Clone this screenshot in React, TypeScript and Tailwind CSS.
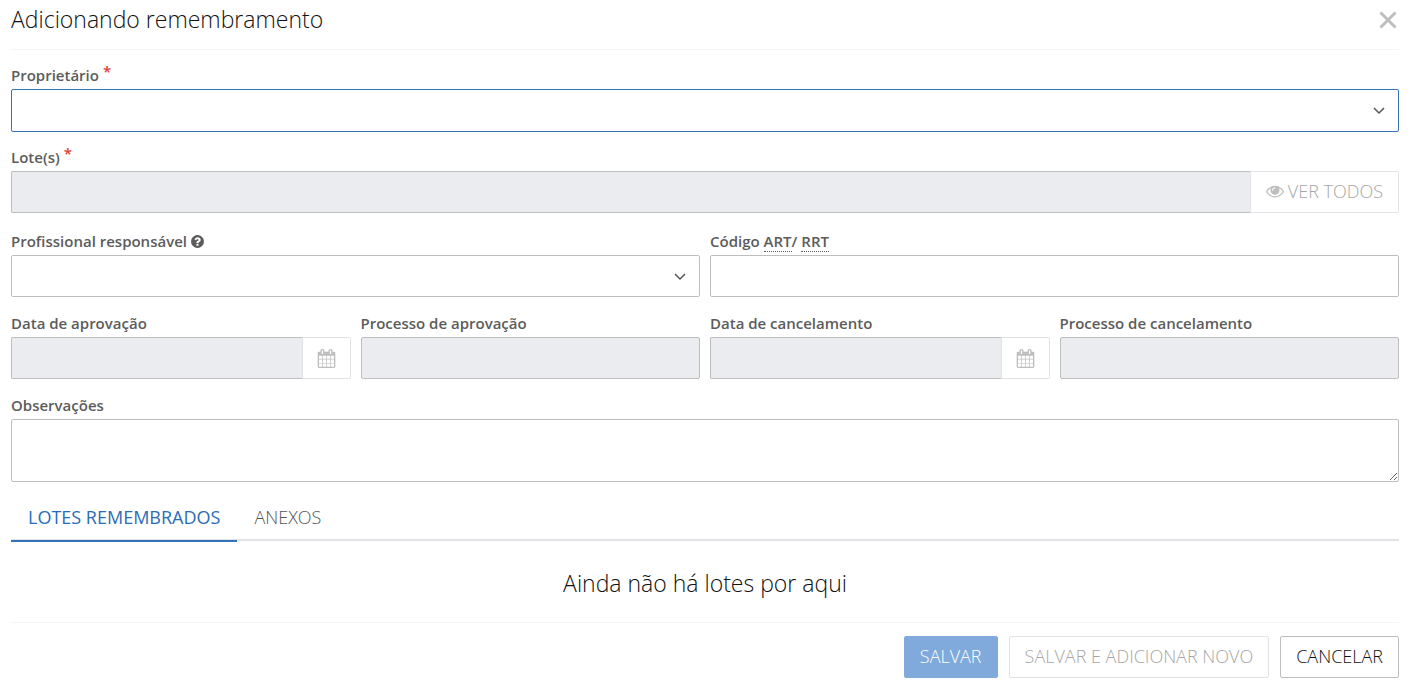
import { useState, type ReactNode } from 'react'
import clsx from 'clsx'

const FIELD = 'block w-full rounded-xs border bg-white px-3 text-base outline-none disabled:bg-[#ebecf0]'
const INPUT = 'h-[42px] border-[#bebebe]'
const BUTTON = 'h-[42px] rounded-xs border px-[15px] pb-[2px] text-lg'
const ADDON = 'h-[42px] shrink-0 rounded-r-xs border border-l-0 border-[#e1e1e6] bg-white text-[#bebebe]'

const EYE = 'M1664 960q-152-236-381-353 61 104 61 225 0 185-131.5 316.5t-316.5 131.5-316.5-131.5-131.5-316.5q0-121 61-225-229 117-381 353 133 205 333.5 326.5t434.5 121.5 434.5-121.5 333.5-326.5zm-720-384q0-20-14-34t-34-14q-125 0-214.5 89.5t-89.5 214.5q0 20 14 34t34 14 34-14 14-34q0-86 61-147t147-61q20 0 34-14t14-34zm848 384q0 34-20 69-140 230-376.5 368.5t-499.5 138.5-499.5-139-376.5-368q-20-35-20-69t20-69q140-229 376.5-368t499.5-139 499.5 139 376.5 368q20 35 20 69z'
const CALENDAR = 'M192 1664h288v-288h-288v288zm352 0h320v-288h-320v288zm-352-352h288v-320h-288v320zm352 0h320v-320h-320v320zm-352-384h288v-288h-288v288zm736 736h320v-288h-320v288zm-384-736h320v-288h-320v288zm768 736h288v-288h-288v288zm-384-352h320v-320h-320v320zm-352-864v-288q0-13-9.5-22.5t-22.5-9.5h-64q-13 0-22.5 9.5t-9.5 22.5v288q0 13 9.5 22.5t22.5 9.5h64q13 0 22.5-9.5t9.5-22.5zm736 864h288v-320h-288v320zm-384-384h320v-288h-320v288zm384 0h288v-288h-288v288zm32-480v-288q0-13-9.5-22.5t-22.5-9.5h-64q-13 0-22.5 9.5t-9.5 22.5v288q0 13 9.5 22.5t22.5 9.5h64q13 0 22.5-9.5t9.5-22.5zm384-64v1280q0 52-38 90t-90 38h-1408q-52 0-90-38t-38-90v-1280q0-52 38-90t90-38h128v-96q0-66 47-113t113-47h64q66 0 113 47t47 113v96h384v-96q0-66 47-113t113-47h64q66 0 113 47t47 113v96h128q52 0 90 38t38 90z'
const QUESTION = 'M1024 1376v-192q0-14-9-23t-23-9h-192q-14 0-23 9t-9 23v192q0 14 9 23t23 9h192q14 0 23-9t9-23zm256-672q0-88-55.5-163t-138.5-116-170-41q-243 0-371 213-15 24 8 42l132 100q7 6 19 6 16 0 25-12 53-68 86-92 34-24 86-24 48 0 85.5 26t37.5 59q0 38-20 61t-68 45q-63 28-115.5 86.5t-52.5 125.5v36q0 14 9 23t23 9h192q14 0 23-9t9-23q0-19 21.5-49.5t54.5-49.5q32-18 49-28.5t46-35 44.5-48 28-60.5 12.5-81zm384 192q0 209-103 385.5t-279.5 279.5-385.5 103-385.5-103-279.5-279.5-103-385.5 103-385.5 279.5-279.5 385.5-103 385.5 103 279.5 279.5 103 385.5z'

function Glyph({ d, className }: { d: string; className?: string }) {
  return <svg viewBox="0 0 1792 1792" fill="currentColor" aria-hidden="true" className={className}><path d={d} /></svg>
}

function Field({ id, label, required, children }: {
  id: string; label: ReactNode; required?: boolean; children: ReactNode
}) {
  return (
    <div className="min-w-0">
      <label htmlFor={id} className="flex h-[22px] items-start gap-1 whitespace-pre text-[15px] leading-4 font-semibold text-[#5c5c5c]">
        <span>{label}</span>
        {required && <span className="-mt-1 text-[#e03c31]">*</span>}
      </label>
      {children}
    </div>
  )
}

function Select({ id, active }: { id: string; active?: boolean }) {
  return (
    <div className="relative h-[42px]">
      <select id={id} className={clsx(FIELD, 'appearance-none', active ? 'h-[43px] border-[#3373b9]' : 'h-[42px] border-[#bebebe]')}>
        <option value=""></option>
      </select>
      <svg viewBox="0 0 12 8" fill="none" stroke="#555" strokeWidth="1.5" aria-hidden="true"
        className="pointer-events-none absolute top-[18px] right-[14px] h-2 w-3">
        <path d="M1 1l5 5 5-5" />
      </svg>
    </div>
  )
}

function DateInput({ id }: { id: string }) {
  return (
    <div className="flex">
      <input id={id} type="text" disabled className={clsx(FIELD, INPUT, 'min-w-0 flex-1 rounded-r-none border-r-[#e1e1e6]')} />
      <button type="button" disabled aria-label="Abrir calendário" className={clsx(ADDON, 'flex w-12 items-center justify-center')}>
        <Glyph d={CALENDAR} className="size-[19px]" />
      </button>
    </div>
  )
}

const TABS = ['LOTES REMEMBRADOS', 'ANEXOS']

export default function App() {
  const [tab, setTab] = useState(TABS[0])

  return (
    <form className="bg-white pr-[13px] pl-[11px] font-['Open_Sans',sans-serif] text-[#111]" onSubmit={(e) => e.preventDefault()}>
      <header className="flex h-[50px] items-start justify-between border-b border-[#f4f4f4] pt-[3px]">
        <h1 className="text-[23px] leading-8 font-light">Adicionando remembramento</h1>
        <button type="button" aria-label="Fechar" className="mt-2 mr-[2px] text-[#bebebe]">
          <svg viewBox="0 0 18 18" stroke="currentColor" strokeWidth="3" className="size-[18px]"><path d="M1.5 1.5l15 15M16.5 1.5l-15 15" /></svg>
        </button>
      </header>

      <div className="mt-[17px] space-y-[18px]">
        <Field id="proprietario" label="Proprietário" required>
          <Select id="proprietario" active />
        </Field>

        <Field id="lotes" label="Lote(s)" required>
          <div className="flex">
            <input id="lotes" type="text" disabled className={clsx(FIELD, INPUT, 'min-w-0 flex-1 rounded-r-none border-r-[#e1e1e6]')} />
            <button type="button" disabled className={clsx(ADDON, 'flex items-center gap-1 px-[15px] pb-[2px] text-lg font-light')}>
              <Glyph d={EYE} className="size-[18px]" />
              <span className="text-[#a6a6a6]">VER TODOS</span>
            </button>
          </div>
        </Field>

        <div className="grid grid-cols-2 gap-[10px] pt-[2px]">
          <Field id="profissional" label={<span className="flex items-center gap-[3px]">Profissional responsável<Glyph d={QUESTION} className="size-[15px]" /></span>}>
            <Select id="profissional" />
          </Field>
          <Field id="codigo" label={<>Código <span className="border-b border-dotted border-[#5c5c5c]">ART</span>/ <span className="border-b border-dotted border-[#5c5c5c]">RRT</span></>}>
            <input id="codigo" type="text" className={clsx(FIELD, INPUT)} />
          </Field>
        </div>

        <div className="grid grid-cols-4 gap-[10px]">
          <Field id="data-aprovacao" label="Data de aprovação"><DateInput id="data-aprovacao" /></Field>
          <Field id="processo-aprovacao" label="Processo de aprovação">
            <input id="processo-aprovacao" type="text" disabled className={clsx(FIELD, INPUT)} />
          </Field>
          <Field id="data-cancelamento" label="Data de cancelamento"><DateInput id="data-cancelamento" /></Field>
          <Field id="processo-cancelamento" label="Processo de cancelamento">
            <input id="processo-cancelamento" type="text" disabled className={clsx(FIELD, INPUT)} />
          </Field>
        </div>

        <Field id="observacoes" label="Observações">
          <textarea id="observacoes" className={clsx(FIELD, 'h-[63px] resize-y border-[#bebebe] py-2')} />
        </Field>
      </div>

      <div role="tablist" className="mt-[11px] flex h-12 border-b-2 border-[#e1e1e6]">
        {TABS.map((t) => (
          <button key={t} type="button" role="tab" aria-selected={t === tab} onClick={() => setTab(t)}
            className={clsx('-mb-[3px] h-[49px] border-b-2 px-[17px] text-lg', t === tab ? 'border-[#3373b9] font-medium text-[#2b6cb8]' : 'border-transparent font-light text-[#555]')}>
            {t}
          </button>
        ))}
      </div>

      <p className="flex h-[81px] items-center justify-center pt-1 text-[23px] font-light">Ainda não há lotes por aqui</p>

      <footer className="flex justify-end gap-[11px] border-t border-[#f4f4f4] pt-[13px] pb-[7px]">
        <button type="submit" disabled className={clsx(BUTTON, 'border-[#80aadc] bg-[#80aadc] text-white font-light')}>SALVAR</button>
        <button type="button" disabled className={clsx(BUTTON, 'border-[#e1e1e6] font-light text-[#a6a6a6]')}>SALVAR E ADICIONAR NOVO</button>
        <button type="button" className={clsx(BUTTON, 'border-[#bebebe] font-light')}>CANCELAR</button>
      </footer>
    </form>
  )
}
